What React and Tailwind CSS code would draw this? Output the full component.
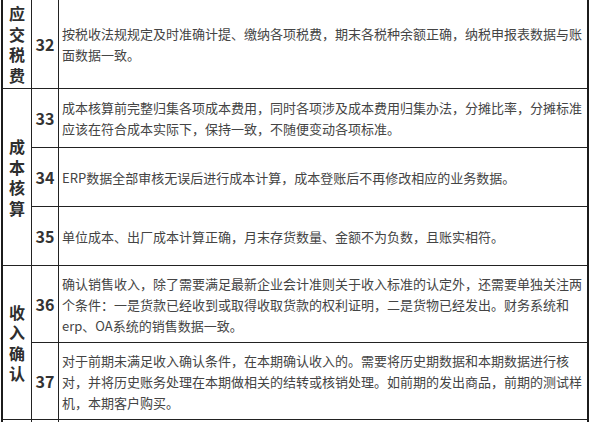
import React from 'react';

const rows = [
  {
    no: '32',
    text: '按税收法规规定及时准确计提、缴纳各项税费，期末各税种余额正确，纳税申报表数据与账面数据一致。',
  },
  {
    no: '33',
    text: '成本核算前完整归集各项成本费用，同时各项涉及成本费用归集办法，分摊比率，分摊标准应该在符合成本实际下，保持一致，不随便变动各项标准。',
  },
  { no: '34', text: 'ERP数据全部审核无误后进行成本计算，成本登账后不再修改相应的业务数据。' },
  { no: '35', text: '单位成本、出厂成本计算正确，月末存货数量、金额不为负数，且账实相符。' },
  {
    no: '36',
    text: '确认销售收入，除了需要满足最新企业会计准则关于收入标准的认定外，还需要单独关注两个条件：一是货款已经收到或取得收取货款的权利证明，二是货物已经发出。财务系统和erp、OA系统的销售数据一致。',
  },
  {
    no: '37',
    text: '对于前期未满足收入确认条件，在本期确认收入的。需要将历史期数据和本期数据进行核对，并将历史账务处理在本期做相关的结转或核销处理。如前期的发出商品，前期的测试样机，本期客户购买。',
  },
];

const Category = ({ chars, span }) => (
  <div
    className={`${span} col-start-1 border-r border-b border-[#222] flex items-center justify-center`}
  >
    <p className="w-[17px] break-all text-center text-[16px] leading-[20.5px] font-bold text-[#2e2e2e]">
      {chars}
    </p>
  </div>
);

export default function App() {
  return (
    <div className="w-[590px] h-[422px] overflow-hidden bg-white font-['Noto_Sans_CJK_SC',sans-serif]">
      <div className="w-[588px] ml-[1px] border-x-2 border-[#1c1c1c] grid grid-cols-[29px_27px_1fr] grid-rows-[89px_59px_59px_59px_77px_77px_40px]">
        <Category chars="应交税费" span="row-start-1 row-span-1" />
        <Category chars="成本核算" span="row-start-2 row-span-3" />
        <Category chars="收入确认" span="row-start-5 row-span-2" />
        {rows.map((r, i) => (
          <React.Fragment key={r.no}>
            <div
              className="col-start-2 border-r border-b border-[#222] flex items-center justify-center text-[16px] font-bold text-[#333]"
              style={{ gridRowStart: i + 1 }}
            >
              {r.no}
            </div>
            <div
              className="col-start-3 border-b border-[#222] flex items-center pl-[3px] pr-[2px] text-[13px] leading-[21px] text-[#444]"
              style={{ gridRowStart: i + 1 }}
            >
              <p>{r.text}</p>
            </div>
          </React.Fragment>
        ))}
        <div className="row-start-7 col-start-1 border-r border-[#222]" />
        <div className="row-start-7 col-start-2 border-r border-[#222]" />
        <div className="row-start-7 col-start-3" />
      </div>
    </div>
  );
}
